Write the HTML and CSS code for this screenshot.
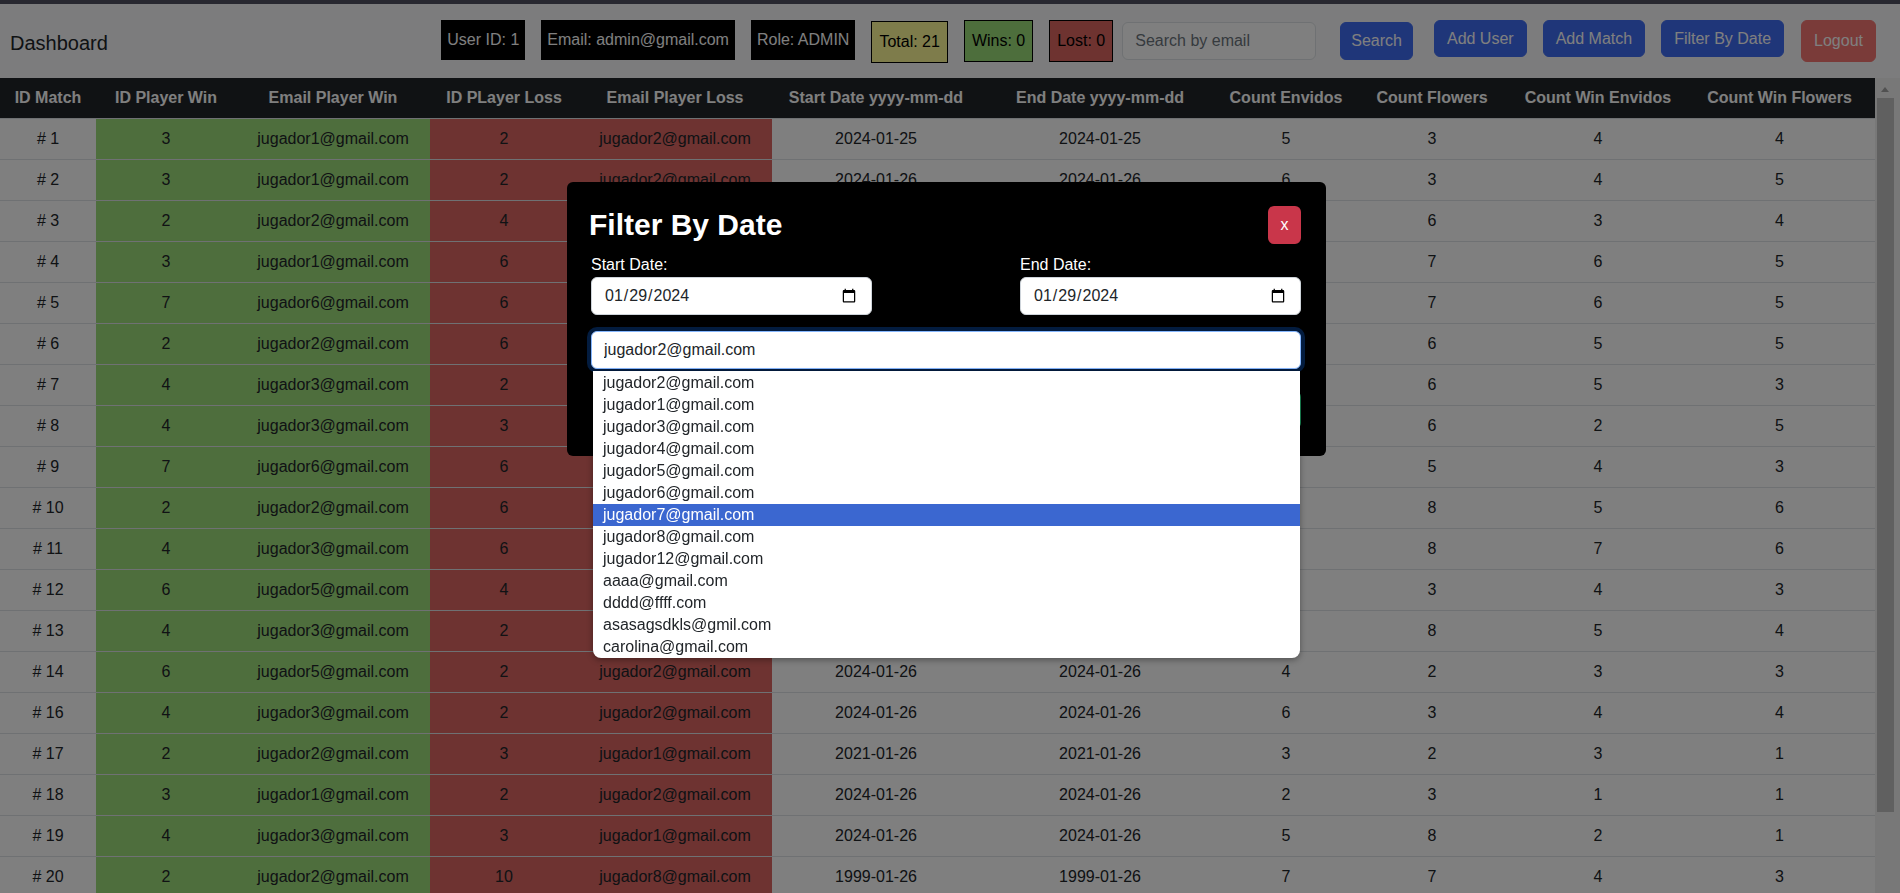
FILE: index.html
```html
<!DOCTYPE html>
<html lang="en">
<head>
<meta charset="utf-8">
<title>Dashboard</title>
<link rel="stylesheet" href="styles.css">
</head>
<body>
<div class="top-stripe"></div>
<header class="navbar">
  <div class="brand">Dashboard</div>
  <div class="nav-items">
    <span class="badge badge-dark">User ID: 1</span>
    <span class="badge badge-dark">Email: admin@gmail.com</span>
    <span class="badge badge-dark">Role: ADMIN</span>
    <span class="badge badge-total">Total: 21</span>
    <span class="badge badge-wins">Wins: 0</span>
    <span class="badge badge-lost">Lost: 0</span>
    <input class="search-input" type="text" placeholder="Search by email">
    <button class="btn btn-blue btn-search">Search</button>
    <button class="btn btn-blue btn-top">Add User</button>
    <button class="btn btn-blue btn-top">Add Match</button>
    <button class="btn btn-blue btn-top btn-last">Filter By Date</button>
    <button class="btn btn-logout">Logout</button>
  </div>
</header>

<div class="content">
  <div class="table-wrap">
    <table class="matches">
      <colgroup>
        <col class="c1"><col class="c2"><col class="c3"><col class="c4"><col class="c5"><col class="c6"><col class="c7"><col class="c8"><col class="c9"><col class="c10"><col class="c11">
      </colgroup>
      <thead>
        <tr>
          <th>ID Match</th><th>ID Player Win</th><th>Email Player Win</th><th>ID PLayer Loss</th><th>Email Player Loss</th><th>Start Date yyyy-mm-dd</th><th>End Date yyyy-mm-dd</th><th>Count Envidos</th><th>Count Flowers</th><th>Count Win Envidos</th><th>Count Win Flowers</th>
        </tr>
      </thead>
      <tbody>
        <tr><td># 1</td><td class="win">3</td><td class="win">jugador1@gmail.com</td><td class="loss">2</td><td class="loss">jugador2@gmail.com</td><td>2024-01-25</td><td>2024-01-25</td><td>5</td><td>3</td><td>4</td><td>4</td></tr>
        <tr><td># 2</td><td class="win">3</td><td class="win">jugador1@gmail.com</td><td class="loss">2</td><td class="loss">jugador2@gmail.com</td><td>2024-01-26</td><td>2024-01-26</td><td>6</td><td>3</td><td>4</td><td>5</td></tr>
        <tr><td># 3</td><td class="win">2</td><td class="win">jugador2@gmail.com</td><td class="loss">4</td><td class="loss">jugador3@gmail.com</td><td>2024-01-26</td><td>2024-01-26</td><td>5</td><td>6</td><td>3</td><td>4</td></tr>
        <tr><td># 4</td><td class="win">3</td><td class="win">jugador1@gmail.com</td><td class="loss">6</td><td class="loss">jugador5@gmail.com</td><td>2024-01-26</td><td>2024-01-26</td><td>4</td><td>7</td><td>6</td><td>5</td></tr>
        <tr><td># 5</td><td class="win">7</td><td class="win">jugador6@gmail.com</td><td class="loss">6</td><td class="loss">jugador5@gmail.com</td><td>2024-01-26</td><td>2024-01-26</td><td>6</td><td>7</td><td>6</td><td>5</td></tr>
        <tr><td># 6</td><td class="win">2</td><td class="win">jugador2@gmail.com</td><td class="loss">6</td><td class="loss">jugador5@gmail.com</td><td>2024-01-26</td><td>2024-01-26</td><td>5</td><td>6</td><td>5</td><td>5</td></tr>
        <tr><td># 7</td><td class="win">4</td><td class="win">jugador3@gmail.com</td><td class="loss">2</td><td class="loss">jugador2@gmail.com</td><td>2024-01-26</td><td>2024-01-26</td><td>7</td><td>6</td><td>5</td><td>3</td></tr>
        <tr><td># 8</td><td class="win">4</td><td class="win">jugador3@gmail.com</td><td class="loss">3</td><td class="loss">jugador1@gmail.com</td><td>2024-01-26</td><td>2024-01-26</td><td>3</td><td>6</td><td>2</td><td>5</td></tr>
        <tr><td># 9</td><td class="win">7</td><td class="win">jugador6@gmail.com</td><td class="loss">6</td><td class="loss">jugador5@gmail.com</td><td>2024-01-26</td><td>2024-01-26</td><td>5</td><td>5</td><td>4</td><td>3</td></tr>
        <tr><td># 10</td><td class="win">2</td><td class="win">jugador2@gmail.com</td><td class="loss">6</td><td class="loss">jugador5@gmail.com</td><td>2024-01-26</td><td>2024-01-26</td><td>6</td><td>8</td><td>5</td><td>6</td></tr>
        <tr><td># 11</td><td class="win">4</td><td class="win">jugador3@gmail.com</td><td class="loss">6</td><td class="loss">jugador5@gmail.com</td><td>2024-01-26</td><td>2024-01-26</td><td>8</td><td>8</td><td>7</td><td>6</td></tr>
        <tr><td># 12</td><td class="win">6</td><td class="win">jugador5@gmail.com</td><td class="loss">4</td><td class="loss">jugador3@gmail.com</td><td>2024-01-26</td><td>2024-01-26</td><td>4</td><td>3</td><td>4</td><td>3</td></tr>
        <tr><td># 13</td><td class="win">4</td><td class="win">jugador3@gmail.com</td><td class="loss">2</td><td class="loss">jugador2@gmail.com</td><td>2024-01-26</td><td>2024-01-26</td><td>6</td><td>8</td><td>5</td><td>4</td></tr>
        <tr><td># 14</td><td class="win">6</td><td class="win">jugador5@gmail.com</td><td class="loss">2</td><td class="loss">jugador2@gmail.com</td><td>2024-01-26</td><td>2024-01-26</td><td>4</td><td>2</td><td>3</td><td>3</td></tr>
        <tr><td># 16</td><td class="win">4</td><td class="win">jugador3@gmail.com</td><td class="loss">2</td><td class="loss">jugador2@gmail.com</td><td>2024-01-26</td><td>2024-01-26</td><td>6</td><td>3</td><td>4</td><td>4</td></tr>
        <tr><td># 17</td><td class="win">2</td><td class="win">jugador2@gmail.com</td><td class="loss">3</td><td class="loss">jugador1@gmail.com</td><td>2021-01-26</td><td>2021-01-26</td><td>3</td><td>2</td><td>3</td><td>1</td></tr>
        <tr><td># 18</td><td class="win">3</td><td class="win">jugador1@gmail.com</td><td class="loss">2</td><td class="loss">jugador2@gmail.com</td><td>2024-01-26</td><td>2024-01-26</td><td>2</td><td>3</td><td>1</td><td>1</td></tr>
        <tr><td># 19</td><td class="win">4</td><td class="win">jugador3@gmail.com</td><td class="loss">3</td><td class="loss">jugador1@gmail.com</td><td>2024-01-26</td><td>2024-01-26</td><td>5</td><td>8</td><td>2</td><td>1</td></tr>
        <tr><td># 20</td><td class="win">2</td><td class="win">jugador2@gmail.com</td><td class="loss">10</td><td class="loss">jugador8@gmail.com</td><td>1999-01-26</td><td>1999-01-26</td><td>7</td><td>7</td><td>4</td><td>3</td></tr>
        <tr><td># 21</td><td class="win">3</td><td class="win">jugador1@gmail.com</td><td class="loss">4</td><td class="loss">jugador3@gmail.com</td><td>2024-01-29</td><td>2024-01-29</td><td>5</td><td>4</td><td>3</td><td>2</td></tr>
      </tbody>
    </table>
  </div>
  <div class="scrollbar" aria-hidden="true">
    <div class="sb-arrow"></div>
    <div class="sb-thumb"></div>
  </div>
</div>

<div class="backdrop"></div>
<div class="modal-layer">
  <div class="modal">
    <div class="modal-head">
      <h2 class="modal-title">Filter By Date</h2>
      <button class="btn-close">x</button>
    </div>
    <form class="filter-form">
      <div class="date-row">
        <div class="field">
          <label class="field-label" for="start">Start Date:</label>
          <input class="form-input" id="start" type="date" value="2024-01-29">
        </div>
        <div class="field">
          <label class="field-label" for="end">End Date:</label>
          <input class="form-input" id="end" type="date" value="2024-01-29">
        </div>
      </div>
      <div class="email-field">
        <input class="form-input email-input is-focused" type="text" value="jugador2@gmail.com">
        <ul class="suggestions">
          <li>jugador2@gmail.com</li>
          <li>jugador1@gmail.com</li>
          <li>jugador3@gmail.com</li>
          <li>jugador4@gmail.com</li>
          <li>jugador5@gmail.com</li>
          <li>jugador6@gmail.com</li>
          <li class="active">jugador7@gmail.com</li>
          <li>jugador8@gmail.com</li>
          <li>jugador12@gmail.com</li>
          <li>aaaa@gmail.com</li>
          <li>dddd@ffff.com</li>
          <li>asasagsdkls@gmil.com</li>
          <li>carolina@gmail.com</li>
        </ul>
      </div>
      <div class="form-actions">
        <button class="btn-filter" type="button">Filter</button>
      </div>
    </form>
  </div>
</div>
</body>
</html>
```

FILE: styles.css
```css
* { box-sizing: border-box; }

html, body {
  margin: 0;
  height: 100%;
  overflow: hidden;
}

body {
  font-family: "Liberation Sans", Arial, sans-serif;
  font-size: 16px;
  line-height: 24px;
  color: #212529;
  background: #ffffff;
}

.top-stripe {
  height: 4px;
  background: #505060;
}

.navbar {
  height: 74px;
  background: #f8f9fa;
  display: flex;
  align-items: flex-start;
  padding: 16px 24px 0 10px;
}

.brand {
  font-size: 20px;
  line-height: 30px;
  margin-top: 8px;
  color: #212529;
}

.nav-items {
  margin-left: auto;
  display: flex;
  align-items: flex-start;
}

.badge {
  display: inline-block;
  padding: 8px 7px;
  line-height: 24px;
  margin-right: 16px;
  white-space: nowrap;
}

.badge-dark { background: #000; color: #fff; padding-left: 6px; padding-right: 6px; }
.badge-total { background: #fdf896; color: #000; border: 1px solid #000; margin-top: 1px; }
.badge-wins { background: #9adc78; color: #000; border: 1px solid #000; }
.badge-lost { background: #dc6660; color: #000; border: 1px solid #000; margin-right: 9px; }

.search-input {
  margin-top: 2px;
  width: 194px;
  height: 38px;
  padding: 6px 12px;
  font: inherit;
  color: #212529;
  background: #fff;
  border: 1px solid #dee2e6;
  border-radius: 6px;
  margin-right: 24px;
}
.search-input::placeholder { color: #6c757d; }

.btn {
  font: inherit;
  line-height: 24px;
  padding: 6px 12px;
  border: 1px solid transparent;
  border-radius: 6px;
  color: #fff;
  cursor: pointer;
  white-space: nowrap;
}

.btn-blue { background: #3e6cf2; border-color: #3e6cf2; }
.btn-search { margin-top: 2px; margin-right: 21px; height: 38px; padding-left: 10px; padding-right: 10px; }
.btn-top { height: 37px; margin-right: 16px; padding-top: 5px; padding-bottom: 5px; }
.btn-last { margin-right: 17px; }
.btn-logout { background: #f47672; border-color: #f47672; height: 42px; }

/* table + scrollbar */
.content {
  display: flex;
  height: calc(100vh - 78px);
}

.table-wrap {
  flex: 1;
  min-width: 0;
  overflow: hidden;
  background: #fff;
}

.scrollbar {
  flex: none;
  width: 25px;
  background: #f1f1f1;
}

.sb-arrow {
  width: 0;
  height: 0;
  margin: 9px 0 6px 6px;
  border-left: 4.5px solid transparent;
  border-right: 4.5px solid transparent;
  border-bottom: 5px solid #a3a3a3;
}

.sb-thumb {
  height: 714px;
  margin: 0 6px 0 2px;
  background: #c1c1c1;
}

.matches {
  width: 1875px;
  table-layout: fixed;
  border-collapse: collapse;
}

.c1 { width: 96px; }
.c2 { width: 140px; }
.c3 { width: 194px; }
.c4 { width: 148px; }
.c5 { width: 194px; }
.c6 { width: 208px; }
.c7 { width: 240px; }
.c8 { width: 132px; }
.c9 { width: 160px; }
.c10 { width: 172px; }
.c11 { width: 191px; }

.matches th,
.matches td {
  padding: 8px;
  text-align: center;
  white-space: nowrap;
}

.matches thead th {
  background: #212529;
  color: #fff;
  font-weight: bold;
  height: 40px;
}

.matches tbody td {
  border-top: 1px solid #dee2e6;
  background: #fff;
  color: #212529;
}

.matches tbody td.win { background: #9cdc7a; }
.matches tbody td.loss { background: #dc6662; }

/* modal */
.backdrop {
  position: fixed;
  inset: 0;
  background: rgba(0, 0, 0, 0.5);
}

.modal-layer {
  position: fixed;
  inset: 0;
  display: flex;
  justify-content: center;
  align-items: flex-start;
  padding: 182px 7px 0 0;
}

.modal {
  width: 759px;
  background: #000;
  border-radius: 6px;
  padding: 24px 24px 27px;
  color: #fff;
}

.modal-head {
  display: flex;
  justify-content: space-between;
  align-items: center;
}

.modal-title {
  margin: 0 0 0 -2px;
  font-size: 30px;
  line-height: 38px;
  font-weight: bold;
}

.btn-close {
  width: 33px;
  height: 38px;
  margin-right: 1px;
  border: none;
  border-radius: 6px;
  background: #c9364a;
  color: #fff;
  font: inherit;
  line-height: 24px;
  padding: 0;
}

.date-row {
  margin-top: 9px;
  display: flex;
  justify-content: space-between;
  padding-right: 1px;
}

.field { width: 281px; }

.field-label {
  display: block;
  line-height: 24px;
  color: #fff;
}

.form-input {
  display: block;
  width: 100%;
  height: 38px;
  padding: 6px 12px;
  font: inherit;
  line-height: 24px;
  color: #212529;
  background: #fff;
  border: 1px solid #ced4da;
  border-radius: 6px;
}

.email-field {
  position: relative;
  margin-top: 16px;
  padding-right: 1px;
}

.email-input.is-focused {
  border-color: #86b7fe;
  box-shadow: 0 0 0 4px rgba(13, 110, 253, 0.25);
  outline: none;
}

.suggestions {
  position: absolute;
  top: 40px;
  left: 2px;
  right: 2px;
  margin: 0;
  padding: 1px 0 0;
  list-style: none;
  background: #fff;
  border-radius: 0 0 8px 8px;
  box-shadow: 0 2px 6px rgba(0, 0, 0, 0.35);
  z-index: 2;
}

.suggestions li {
  height: 22px;
  line-height: 22px;
  padding-left: 10px;
  color: #212529;
}

.suggestions li.active {
  background: #3b67d0;
  color: #fff;
}

.form-actions {
  display: flex;
  justify-content: flex-end;
  margin-top: 22px;
  padding-right: 1px;
}

.btn-filter {
  width: 120px;
  height: 38px;
  border: none;
  border-radius: 6px;
  background: #198754;
  color: #fff;
  font: inherit;
}
```
